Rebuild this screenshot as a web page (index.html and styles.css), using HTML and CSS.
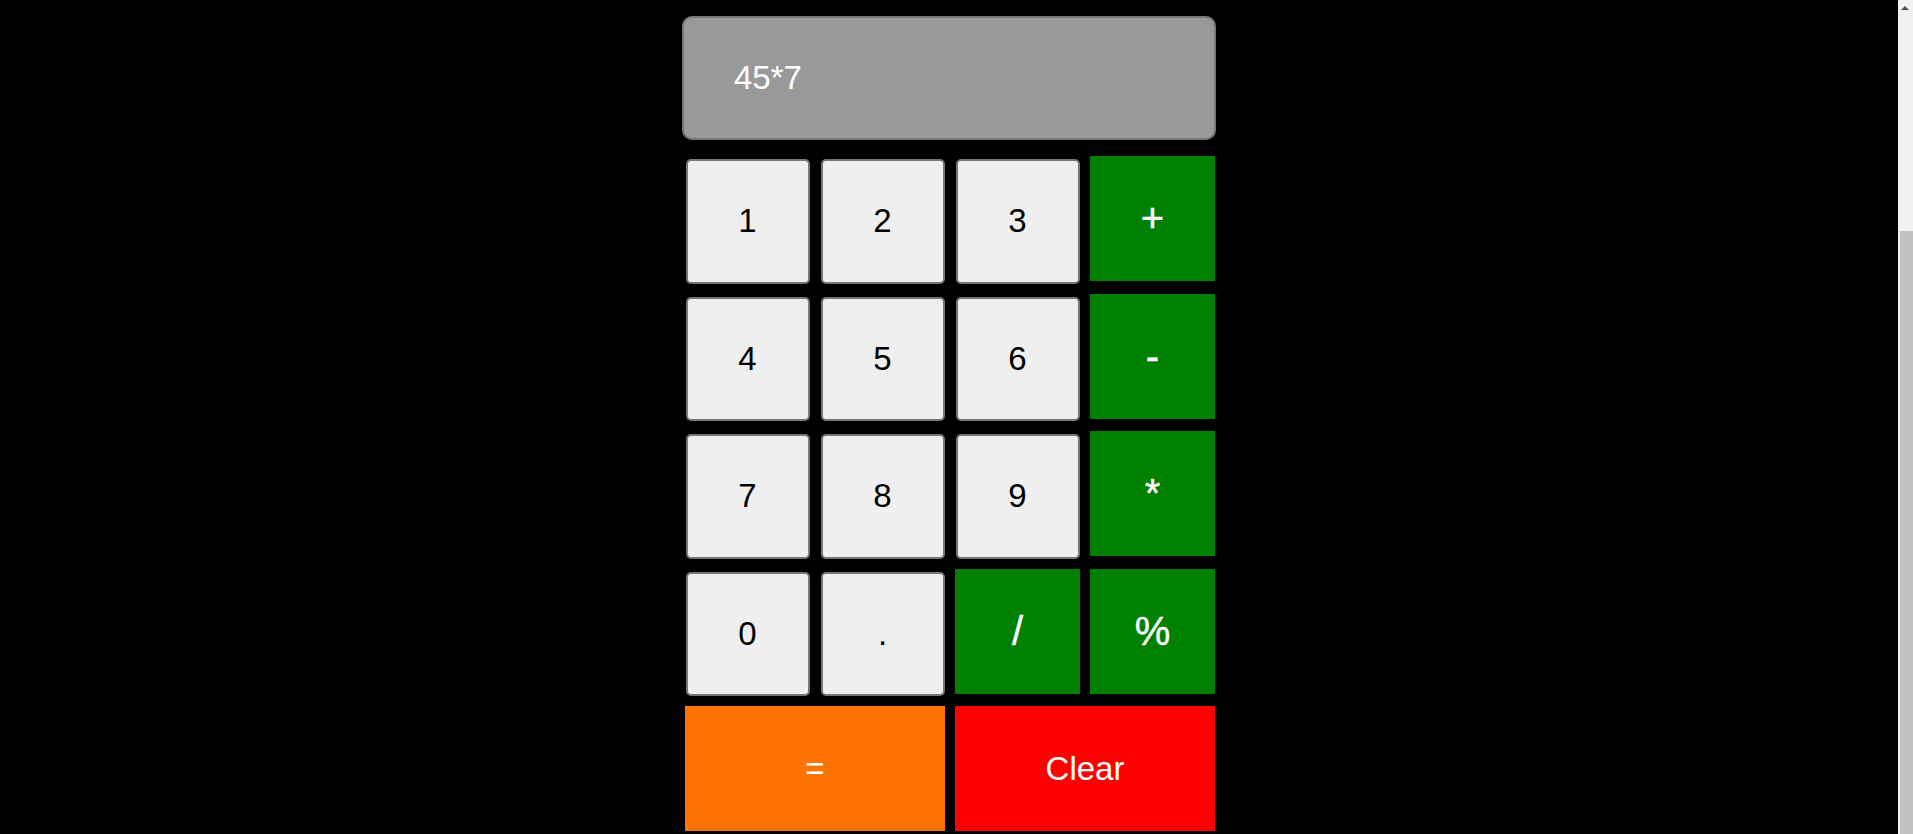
FILE: index.html
```html
<!DOCTYPE html>
<html lang="en">
<head>
<meta charset="utf-8">
<title>Calculator</title>
<link rel="stylesheet" href="styles.css">
</head>
<body>
<main class="calc">
  <div class="display">45*7</div>
  <div class="keys">
    <button class="key num">1</button>
    <button class="key num">2</button>
    <button class="key num">3</button>
    <button class="key op">+</button>
    <button class="key num">4</button>
    <button class="key num">5</button>
    <button class="key num">6</button>
    <button class="key op">-</button>
    <button class="key num">7</button>
    <button class="key num">8</button>
    <button class="key num">9</button>
    <button class="key op">*</button>
    <button class="key num">0</button>
    <button class="key num">.</button>
    <button class="key op">/</button>
    <button class="key op">%</button>
    <button class="key wide equals">=</button>
    <button class="key wide clear">Clear</button>
  </div>
</main>
<div class="scrollbar" aria-hidden="true">
  <span class="scroll-arrow"></span>
  <span class="scroll-thumb"></span>
</div>
</body>
</html>
```

FILE: styles.css
```css
html {
  background: #000;
}

body {
  margin: 0;
  padding: 16px 15px 0 0;
  background: #000;
  font-family: "Liberation Sans", Arial, sans-serif;
}

.calc {
  width: 534px;
  margin: 0 auto;
}

.display {
  box-sizing: border-box;
  height: 124px;
  display: flex;
  align-items: center;
  padding-left: 50px;
  background: #999999;
  border: 2px solid #777777;
  border-radius: 10px;
  color: #ffffff;
  font-size: 33px;
}

.keys {
  display: grid;
  grid-template-columns: repeat(4, 125px);
  grid-auto-rows: 125px;
  column-gap: 10px;
  row-gap: 12.5px;
  margin: 16px 0 0 3px;
}

.key {
  box-sizing: border-box;
  margin: 0;
  padding: 0;
  border: none;
  font-family: "Liberation Sans", Arial, sans-serif;
  font-size: 33px;
  cursor: pointer;
}

.num {
  width: 124px;
  height: 124.5px;
  margin-top: 3px;
  justify-self: center;
  align-self: start;
  background: #efefef;
  color: #000;
  border: 2px solid #767676;
  border-radius: 5px;
}

.op {
  background: #008000;
  color: #fff;
  font-size: 40px;
  -webkit-text-stroke: 0.4px #fff;
}

.wide {
  grid-column: span 2;
  color: #fff;
}

.equals {
  background: #ff7302;
}

.clear {
  background: #ff0000;
}

/* browser scrollbar, drawn over the right edge */
.scrollbar {
  position: fixed;
  top: 0;
  right: 0;
  width: 15px;
  height: 100%;
  background: #f1f1f1;
}

.scroll-arrow {
  position: absolute;
  top: 6px;
  left: 3px;
  width: 0;
  height: 0;
  border-left: 4.5px solid transparent;
  border-right: 4.5px solid transparent;
  border-bottom: 4.5px solid #505050;
}

.scroll-thumb {
  position: absolute;
  top: 231px;
  left: 2px;
  right: 0;
  bottom: 0;
  background: #c1c1c1;
}
```
